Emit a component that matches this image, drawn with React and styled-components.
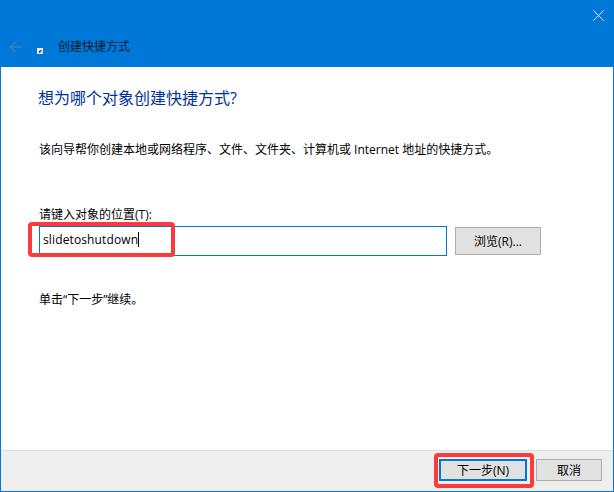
import React from "react";
import styled, { createGlobalStyle } from "styled-components";

const GlobalStyle = createGlobalStyle`
  html, body {
    margin: 0;
    padding: 0;
    background: #ffffff;
  }
  * {
    box-sizing: border-box;
  }
`;

const Win = styled.div`
  width: 614px;
  height: 492px;
  display: flex;
  flex-direction: column;
  border-left: 1px solid #0078d7;
  border-right: 1px solid #0078d7;
  border-bottom: 1px solid #0078d7;
  font-family: "Open Sans", "Noto Sans CJK SC", sans-serif;
  font-size: 12px;
  color: #000000;
  background: #ffffff;
`;

const TitleBar = styled.div`
  height: 67px;
  margin: 0 -1px;
  padding: 10px 10px 0 9px;
  background: #0078d7;
  display: flex;
  flex-direction: column;
`;

const CloseRow = styled.div`
  height: 11px;
  display: flex;
  justify-content: flex-end;
`;

const NavRow = styled.div`
  margin-top: 17px;
  height: 18px;
  display: flex;
  align-items: center;
`;

const BackIcon = styled.svg`
  width: 13px;
  height: 12px;
  margin-right: 15px;
`;

const AppIcon = styled.svg`
  width: 6px;
  height: 6px;
  margin: 8px 15px 0 0;
`;

const WinTitle = styled.span`
  font-size: 12px;
  line-height: 18px;
  color: #001a33;
`;

const Content = styled.div`
  flex: 1;
  padding: 20px 0 0 38px;
  display: flex;
  flex-direction: column;
`;

const Heading = styled.h1`
  margin: 0 0 0 -1px;
  font-size: 16px;
  font-weight: 400;
  line-height: 22px;
  color: #003399;
`;

const Text = styled.p`
  margin: ${(p) => p.$top}px 0 0;
  font-size: 12px;
  line-height: 18px;
`;

const FieldRow = styled.div`
  margin-top: 2px;
  display: flex;
  align-items: center;
  gap: 8px;
`;

const InputBox = styled.div`
  position: relative;
  width: 408px;
  height: 30px;
  padding: 0 0 3px 3px;
  display: flex;
  align-items: center;
  border: 1px solid #0078d7;
  font-size: 12px;
  letter-spacing: 0.13px;
`;

const Caret = styled.span`
  width: 1px;
  height: 15px;
  background: #000000;
`;

const Mark = styled.div`
  position: absolute;
  border: 4px solid #fb3a3e;
  border-radius: 4px;
  pointer-events: none;
  left: ${(p) => p.$left}px;
  top: ${(p) => p.$top}px;
  width: ${(p) => p.$w}px;
  height: ${(p) => p.$h}px;
`;

const Button = styled.button`
  position: relative;
  width: ${(p) => p.$w}px;
  height: ${(p) => p.$h}px;
  padding: 0;
  background: #e1e1e1;
  border: ${(p) => (p.$primary ? "2px solid #0078d7" : "1px solid #adadad")};
  font-family: inherit;
  font-size: 12px;
  color: #000000;
`;

const Footer = styled.div`
  height: 41px;
  padding: 8px 11px 0 0;
  display: flex;
  justify-content: flex-end;
  gap: 9px;
  background: #eeeeee;
  border-top: 1px solid #dfdfdf;
`;

export default function App() {
  return (
    <>
      <GlobalStyle />
      <Win>
        <TitleBar>
          <CloseRow>
            <svg width="11" height="11" viewBox="0 0 11 11">
              <path d="M0.5 0.5L10.5 10.5M10.5 0.5L0.5 10.5" stroke="#ffffff" strokeWidth="1" fill="none" />
            </svg>
          </CloseRow>
          <NavRow>
            <BackIcon viewBox="0 0 13 12">
              <path d="M13 6H1.5M6.5 1L1.5 6L6.5 11" stroke="#3a7fb8" strokeWidth="1.6" fill="none" />
            </BackIcon>
            <AppIcon viewBox="0 0 6 6">
              <rect width="6" height="6" fill="#e6ebf0" />
              <path d="M2.5 5V3H4.5M3 4.5L4.5 2" stroke="#274a78" strokeWidth="1" fill="none" />
            </AppIcon>
            <WinTitle>创建快捷方式</WinTitle>
          </NavRow>
        </TitleBar>
        <Content>
          <Heading>想为哪个对象创建快捷方式?</Heading>
          <Text $top={32}>该向导帮你创建本地或网络程序、文件、文件夹、计算机或 Internet 地址的快捷方式。</Text>
          <Text $top={47}>请键入对象的位置(T):</Text>
          <FieldRow>
            <InputBox>
              slidetoshutdown
              <Caret />
              <Mark $left={-12} $top={-5} $w={147} $h={35} />
            </InputBox>
            <Button $w={86} $h={28}>浏览(R)...</Button>
          </FieldRow>
          <Text $top={35}>单击“下一步”继续。</Text>
        </Content>
        <Footer>
          <Button $primary $w={88} $h={22}>
            下一步(N)
            <Mark $left={-7} $top={-8} $w={100} $h={35} />
          </Button>
          <Button $w={66} $h={22}>取消</Button>
        </Footer>
      </Win>
    </>
  );
}
